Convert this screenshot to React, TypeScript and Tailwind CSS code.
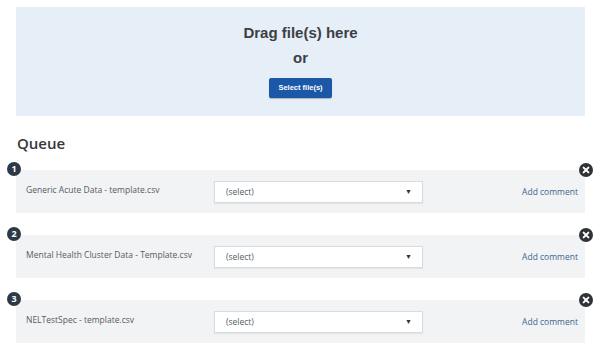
const files = [
  "Generic Acute Data - template.csv",
  "Mental Health Cluster Data - Template.csv",
  "NELTestSpec - template.csv",
];

function CloseIcon() {
  return (
    <svg width="14" height="14" viewBox="0 0 14 14">
      <circle cx="7" cy="7" r="7" fill="#2f3338" />
      <path
        d="M4.6 4.6 L9.4 9.4 M9.4 4.6 L4.6 9.4"
        stroke="#fff"
        strokeWidth="2"
        strokeLinecap="round"
      />
    </svg>
  );
}

function QueueItem({ index, name }: { index: number; name: string }) {
  return (
    <div className="relative mt-[22px] first:mt-[17px]">
      <span className="absolute -top-[8px] -left-[9px] flex h-[14px] w-[14px] items-center justify-center rounded-full bg-[#2e3946] text-[9px] font-bold text-white">
        {index}
      </span>
      <button
        type="button"
        className="absolute -top-[7px] -right-[8px]"
      >
        <CloseIcon />
      </button>
      <div className="flex h-[43px] items-start bg-[#f2f3f4] pl-[10px] pr-[7px]">
        <div className="w-[188px] pt-[14px] text-[8.5px] text-[#555c63]">
          {name}
        </div>
        <div className="mt-[11px] flex h-[22px] w-[209px] items-center justify-between border border-[#d9dcdf] bg-white pl-[11px] pr-[10px] text-[8.5px] text-[#555c63] shadow-[0_1px_1px_rgba(0,0,0,0.06)]">
          <span>(select)</span>
          <span className="text-[7px] text-[#333]">▼</span>
        </div>
        <a
          href="#"
          className="ml-auto mt-[16px] text-[8.5px] text-[#3a6690]"
        >
          Add comment
        </a>
      </div>
    </div>
  );
}

export default function App() {
  return (
    <div className="min-h-[351px] bg-white px-[16px] pt-[7px] font-['Open_Sans',sans-serif]">
      <div className="flex h-[109px] flex-col items-center bg-[#e6eef8]">
        <h2 className="mt-[17px] font-['Liberation_Sans',Arial,sans-serif] text-[15px] font-bold leading-[18px] text-[#3b3f44]">
          Drag file(s) here
        </h2>
        <p className="mt-[7px] font-['Liberation_Sans',Arial,sans-serif] text-[15px] font-bold leading-[18px] text-[#3b3f44]">
          or
        </p>
        <button
          type="button"
          className="mt-[11px] h-[20px] w-[63px] rounded-[2px] bg-[#1c58a8] font-['Liberation_Sans',Arial,sans-serif] text-[7.5px] font-bold text-white shadow-[0_1px_1px_rgba(0,0,0,0.25)]"
        >
          Select file(s)
        </button>
      </div>

      <h3 className="mt-[17px] pl-[1px] text-[15px] font-semibold leading-[20px] text-[#33383d]">
        Queue
      </h3>

      <div>
        {files.map((name, i) => (
          <QueueItem key={name} index={i + 1} name={name} />
        ))}
      </div>
    </div>
  );
}
